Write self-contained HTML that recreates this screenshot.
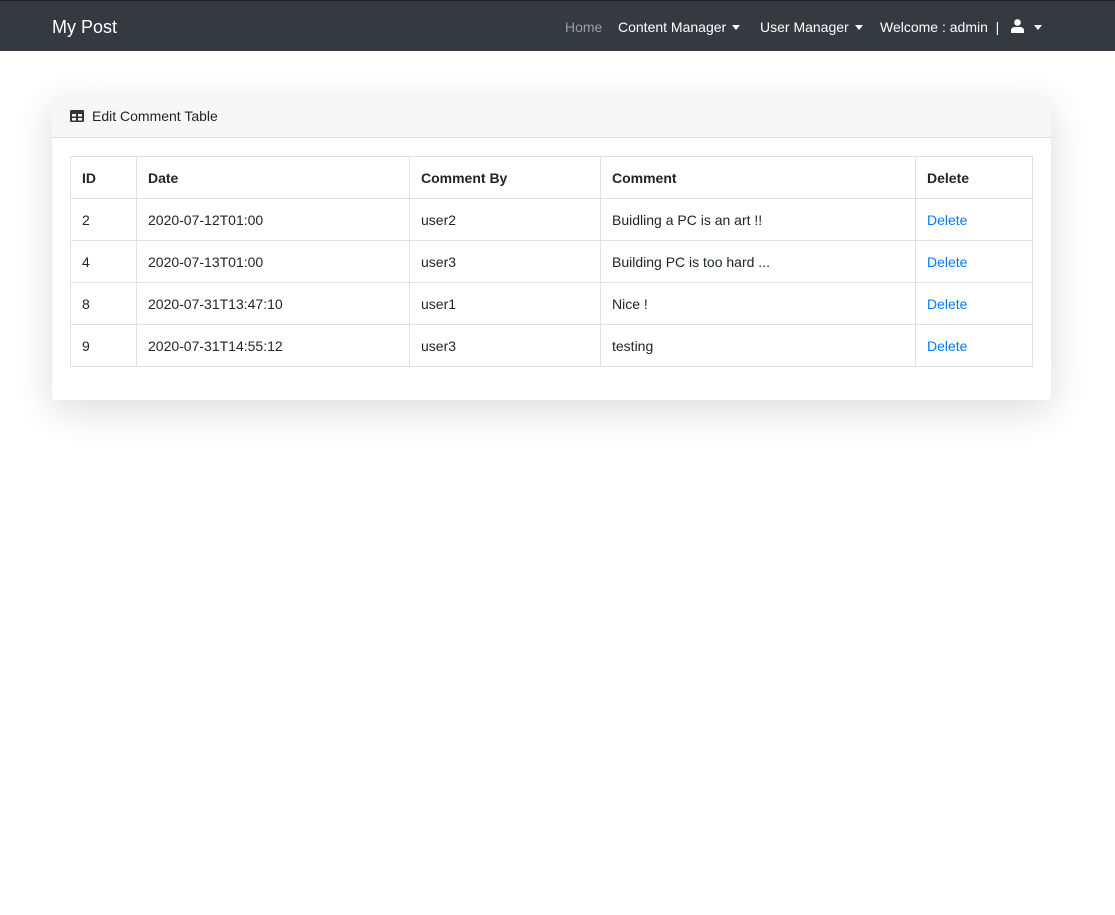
<!DOCTYPE html>
<html><head><style>
body{margin:0;font-family:"Liberation Sans",sans-serif;font-size:14px;color:#212529;background:#fff;width:1115px;height:915px;overflow:hidden}
.nav{height:50px;background:#343a40;position:relative;border-top:1px solid #222}
.brand{position:absolute;left:52px;top:16px;color:#fff;font-size:18px}
.nl{position:absolute;top:18px;color:#fff;font-size:14px;white-space:nowrap}
.caret{display:inline-block;border-left:4px solid transparent;border-right:4px solid transparent;border-top:5px solid #fff;vertical-align:2px;margin-left:6px}
.card{position:absolute;left:52px;top:96px;width:999px;height:304px;border-radius:4px;box-shadow:0 10px 40px rgba(0,0,0,.14);background:#fff}
.ch{height:41px;background:#f7f7f7;border-bottom:1px solid #ddd;border-radius:4px 4px 0 0;position:relative}
.ch span{position:absolute;left:40px;top:12px;font-size:14px}
table{position:absolute;left:18px;top:60px;border-collapse:collapse;width:963px}
td,th{border:1px solid #dee2e6;height:41px;padding:0 11px;text-align:left;font-size:14px}
th{font-weight:bold}
a{color:#007bff;text-decoration:none}
</style></head><body>
<div class="nav">
<div class="brand">My Post</div>
<div class="nl" style="left:565px;color:#9a9da0">Home</div>
<div class="nl" style="left:618px">Content Manager<span class="caret"></span></div>
<div class="nl" style="left:760px">User Manager<span class="caret"></span></div>
<div class="nl" style="left:880px">Welcome : admin &nbsp;|</div>
<svg style="position:absolute;left:1011px;top:18px" width="13" height="14" viewBox="0 0 13 14"><circle cx="6.5" cy="3.5" r="3.3" fill="#fff"/><path d="M0 14v-2.5C0 9 2 8 4 8h5c2 0 4 1 4 3.5V14z" fill="#fff"/></svg>
<div class="nl" style="left:1028px"><span class="caret"></span></div>
</div>
<div class="card">
<div class="ch"><svg style="position:absolute;left:18px;top:14px" width="14" height="12" viewBox="0 0 14 12"><rect x="0" y="0" width="14" height="12" rx="1.5" fill="#333"/><rect x="2" y="4" width="4" height="2.5" fill="#f7f7f7"/><rect x="8" y="4" width="4" height="2.5" fill="#f7f7f7"/><rect x="2" y="8" width="4" height="2.5" fill="#f7f7f7"/><rect x="8" y="8" width="4" height="2.5" fill="#f7f7f7"/></svg><span>Edit Comment Table</span></div>
<table>
<tr><th style="width:43px">ID</th><th style="width:250px">Date</th><th style="width:168px">Comment By</th><th style="width:292px">Comment</th><th>Delete</th></tr>
<tr><td>2</td><td>2020-07-12T01:00</td><td>user2</td><td>Buidling a PC is an art !!</td><td><a>Delete</a></td></tr>
<tr><td>4</td><td>2020-07-13T01:00</td><td>user3</td><td>Building PC is too hard ...</td><td><a>Delete</a></td></tr>
<tr><td>8</td><td>2020-07-31T13:47:10</td><td>user1</td><td>Nice !</td><td><a>Delete</a></td></tr>
<tr><td>9</td><td>2020-07-31T14:55:12</td><td>user3</td><td>testing</td><td><a>Delete</a></td></tr>
</table>
</div>
</body></html>
